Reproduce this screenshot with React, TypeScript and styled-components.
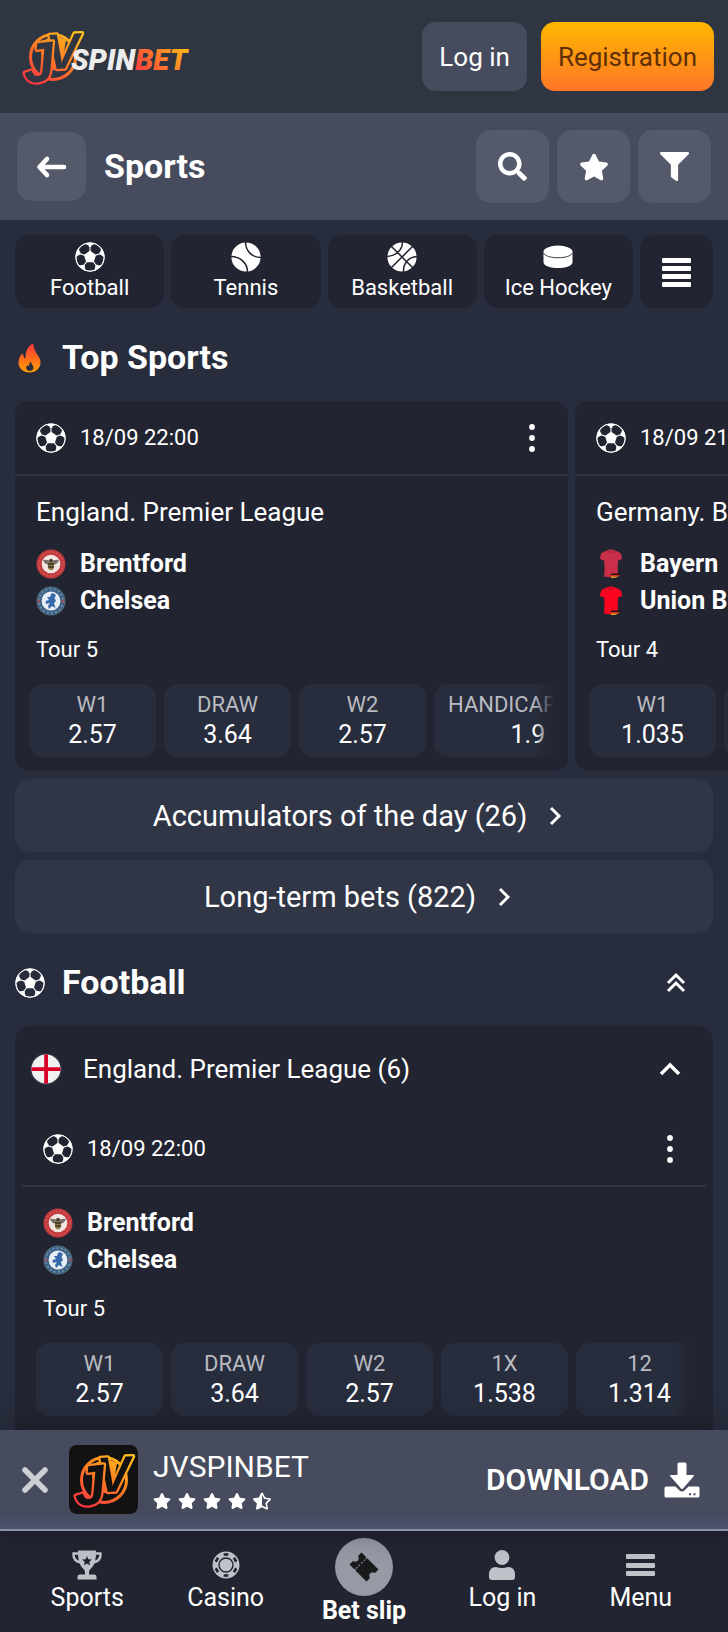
import React from "react";
import styled, { createGlobalStyle, css } from "styled-components";
import { FaFilter, FaSearch, FaStar, FaStarHalfAlt } from "react-icons/fa";

const color = {
  page: "#282d3d",
  header: "#2f3541",
  bar: "#464b5d",
  barButton: "#555a6a",
  card: "#222531",
  line: "#2f3442",
  shortcut: "#313646",
  muted: "#b9bbc1",
  navIcon: "#bfc2c8",
};

const GlobalStyle = createGlobalStyle`
  *, *::before, *::after { box-sizing: border-box; }
  body {
    margin: 0;
    background: ${color.page};
    color: #fff;
    font-family: Roboto, "Liberation Sans", sans-serif;
    font-size: 25px;
    line-height: 30px;
  }
  button { font: inherit; color: inherit; border: 0; padding: 0; cursor: pointer; }
  a { color: inherit; text-decoration: none; }
  h1, h2, h3, p, ul { margin: 0; padding: 0; font-size: inherit; font-weight: inherit; }
  ul { list-style: none; }
  svg { display: block; flex: none; }
`;

const Shell = styled.div`
  display: flex;
  flex-direction: column;
  height: 100vh;
`;

const TopHeader = styled.header`
  display: flex;
  flex: none;
  align-items: center;
  gap: 14px;
  height: 113px;
  padding: 0 14px 0 28px;
  background: ${color.header};
`;

const LogoLink = styled.a`
  margin-right: auto;
`;

const AuthButton = styled.button<{ $primary?: boolean }>`
  height: 69px;
  padding: 0 17px;
  border-radius: 14px;
  background: ${color.bar};
  font-size: 26px;
  ${(p) =>
    p.$primary &&
    css`
      background: linear-gradient(#ffb800, #ff7628);
      color: #5f2f06;
    `}
`;

const TitleBar = styled.div`
  display: flex;
  flex: none;
  align-items: center;
  gap: 8px;
  height: 107px;
  padding: 0 17px;
  background: ${color.bar};
`;

const SquareButton = styled.button<{ $size: number }>`
  display: grid;
  place-items: center;
  width: ${(p) => p.$size}px;
  height: ${(p) => p.$size}px;
  border-radius: 15px;
  background: ${color.barButton};
`;

const PageTitle = styled.h1`
  flex: 1;
  padding: 0 0 2px 10px;
  font-size: 34px;
  font-weight: 700;
  line-height: 40px;
`;

const Content = styled.main`
  flex: 1;
  min-height: 0;
  overflow: hidden auto;
  scrollbar-width: none;
  padding: 15px 15px 0;
`;

const SportTabs = styled.nav`
  display: flex;
  gap: 7px;
`;

const SportTab = styled.button`
  display: flex;
  flex: 1;
  flex-direction: column;
  align-items: center;
  gap: 3px;
  height: 73px;
  padding-top: 7px;
  border-radius: 14px;
  background: ${color.card};
  font-size: 22px;
  line-height: 26px;
`;

const AllSportsTab = styled(SportTab)`
  flex: none;
  width: 73px;
  justify-content: center;
  padding: 0;
`;

const SectionHeading = styled.div`
  display: flex;
  align-items: center;
  gap: 17px;
  height: 93px;
  padding: 6px 22px 0 0;
`;

const SectionTitle = styled.h2`
  flex: 1;
  padding-bottom: 2px;
  font-size: 34px;
  font-weight: 700;
  line-height: 40px;
`;

const IconButton = styled.button`
  display: grid;
  place-items: center;
  width: 30px;
  height: 40px;
  background: none;
`;

const Carousel = styled.div`
  display: flex;
  gap: 7px;
  margin-right: -15px;
  overflow: hidden;
`;

const MatchCard = styled.article<{ $slide?: boolean }>`
  display: flex;
  flex-direction: column;
  border-radius: 14px;
  background: ${color.card};
  ${(p) =>
    p.$slide &&
    css`
      flex: none;
      width: 553px;
    `}
`;

const MatchHead = styled.header`
  display: flex;
  align-items: center;
  gap: 14px;
  height: 75px;
  padding: 0 21px;
  border-bottom: 2px solid ${color.line};
  font-size: 22px;
`;

const MatchTime = styled.time`
  flex: 1;
`;

const MatchBody = styled.div`
  padding: 21px 21px 19px;
`;

const League = styled.h3`
  margin-bottom: 22px;
  font-size: 26px;
`;

const Teams = styled.ul`
  display: grid;
  gap: 7px;
`;

const Team = styled.li`
  display: flex;
  align-items: center;
  gap: 14px;
  font-weight: 700;
`;

const Tour = styled.p`
  margin-top: 19px;
  font-size: 22px;
`;

const OddsRow = styled.div`
  position: relative;
  display: flex;
  gap: 8px;
  margin: 0 14px 14px;
  overflow: hidden;
  &::after {
    content: "";
    position: absolute;
    inset: 0 0 0 auto;
    width: 20px;
    background: linear-gradient(90deg, transparent, ${color.card});
  }
`;

const OddButton = styled.button`
  display: flex;
  flex: none;
  flex-direction: column;
  align-items: center;
  min-width: 127px;
  height: 73px;
  padding: 6px 14px 0;
  border-radius: 14px;
  background: ${color.page};
  white-space: nowrap;
`;

const OddName = styled.span`
  color: ${color.muted};
  font-size: 22px;
  line-height: 30px;
`;

const Shortcut = styled.a`
  display: flex;
  align-items: center;
  justify-content: center;
  gap: 8px;
  height: 73px;
  margin-top: 8px;
  border-radius: 15px;
  background: ${color.shortcut};
  font-size: 29px;
`;

const IconSlot = styled.i`
  display: grid;
  place-items: center;
  width: 40px;
`;

const LeagueGroup = styled.section`
  padding: 0 7px 7px;
  border-radius: 14px 14px 0 0;
  background: ${color.card};
`;

const LeagueHead = styled.header`
  display: flex;
  align-items: center;
  gap: 21px;
  height: 86px;
  padding: 0 21px 0 8px;
`;

const LeagueName = styled.h3`
  flex: 1;
  font-size: 26px;
`;

const AppBanner = styled.aside`
  display: flex;
  flex: none;
  align-items: center;
  height: 101px;
  padding: 0 28px 0 20px;
  border-bottom: 2px solid #8b90ab;
  background: linear-gradient(${color.bar} 85%, #4c5470);
  box-shadow: 0 0 30px rgba(0, 0, 0, 0.3);
  z-index: 1;
`;

const CloseButton = styled(IconButton)`
  margin-right: 19px;
`;

const AppInfo = styled.div`
  flex: 1;
  padding: 0 15px;
`;

const AppName = styled.p`
  font-size: 30px;
  line-height: 36px;
`;

const Rating = styled.div`
  display: flex;
  gap: 7px;
  padding-top: 7px;
`;

const DownloadLink = styled.a`
  display: flex;
  align-items: center;
  gap: 15px;
  font-size: 30px;
  font-weight: 600;
`;

const BottomNav = styled.nav`
  display: flex;
  flex: none;
  height: 101px;
  padding: 0 18px;
  background: ${color.card};
`;

const NavItem = styled.a<{ $active?: boolean }>`
  display: flex;
  flex: 1;
  flex-direction: column;
  align-items: center;
  gap: ${(p) => (p.$active ? 0 : 3)}px;
  padding-top: ${(p) => (p.$active ? 7 : 19)}px;
  color: ${(p) => (p.$active ? "#191a1c" : color.navIcon)};
  span { color: #fff; font-weight: ${(p) => (p.$active ? 700 : 400)}; }
`;

const SlipCircle = styled.div`
  display: grid;
  place-items: center;
  width: 58px;
  height: 58px;
  border-radius: 50%;
  background: #9799a5;
`;

/* ---------- drawings ---------- */

function Emblem({ id, dark }: { id: string; dark: string }) {
  return (
    <g fontFamily='"Liberation Sans", sans-serif' fontStyle="italic">
      <defs>
        <linearGradient id={id} gradientUnits="userSpaceOnUse" x1="6" y1="60" x2="44" y2="4">
          <stop offset="0" stopColor="#ff3344" />
          <stop offset="0.5" stopColor="#ff7a24" />
          <stop offset="1" stopColor="#ffc21c" />
        </linearGradient>
      </defs>
      <circle cx="25" cy="32" r="22.500" fill="none" stroke={`url(#${id})`} strokeWidth="3" />
      <path d="M12 18Q25 8 38 15L33 45L15 45Z" fill={`url(#${id})`} />
      <g fill={dark} stroke={`url(#${id})`} strokeWidth="4.500" paintOrder="stroke" strokeLinejoin="round" fontWeight="700">
        <text x="19" y="44" fontSize="50" transform="rotate(-3 30 44)">V</text>
        <text x="-3" y="57" fontSize="56" transform="rotate(-6 8 58)">J</text>
      </g>
    </g>
  );
}

const Logo = () => (
  <svg width="160" height="64" viewBox="0 0 160 64" overflow="visible" role="img" aria-label="JVSPINBET">
    <defs>
      <linearGradient id="bet" gradientUnits="userSpaceOnUse" x1="106" y1="50" x2="150" y2="16">
        <stop offset="0" stopColor="#ff3340" />
        <stop offset="1" stopColor="#ffb21c" />
      </linearGradient>
    </defs>
    <Emblem id="logoMark" dark={color.header} />
    <text x="43" y="45" fontFamily="Roboto, sans-serif" fontWeight="900" fontStyle="italic" fontSize="29" fill="#ececec">
      SPIN<tspan fill="url(#bet)">BET</tspan>
    </text>
  </svg>
);

const AppIcon = () => (
  <svg width="69" height="69" viewBox="0 0 69 69" aria-hidden="true">
    <rect width="69" height="69" rx="8" fill="#121212" />
    <g transform="translate(10 3)">
      <Emblem id="appMark" dark="#121212" />
    </g>
  </svg>
);

const SoccerBall = ({ dark = color.card }: { dark?: string }) => (
  <svg width="30" height="30" viewBox="-16 -16 32 32" aria-hidden="true">
    <circle r="15.6" fill="#fff" />
    <g fill={dark}>
      {[0, 72, 144, 216, 288].map((angle) => (
        <path
          key={angle}
          transform={`rotate(${angle})`}
          d="M-3.200 5.500H3.200L5.600 8.600Q6 11.600 4.400 13.900Q0 15.400 -4.400 13.900Q-6 11.600 -5.600 8.600Z"
        />
      ))}
    </g>
    <circle r="15.2" fill="none" stroke="#fff" strokeWidth="0.9" />
  </svg>
);

const TennisBall = () => (
  <svg width="30" height="30" viewBox="0 0 30 30" aria-hidden="true">
    <circle cx="15" cy="15" r="14.6" fill="#fff" />
    <path d="M0 14.5C9 14.5 16.5 21 16.5 30M14.5 0C14.5 9 21 15.5 30 15.5" fill="none" stroke={color.card} strokeWidth="1.5" />
  </svg>
);

const Basketball = () => (
  <svg width="30" height="30" viewBox="0 0 30 30" aria-hidden="true">
    <circle cx="15" cy="15" r="14.6" fill="#fff" />
    <path
      d="M4 4L26 26M26 4L4 26M15.500 0C15.500 7 10 14 0 14.500M30 14.500C21 15 16 22 16.500 30"
      fill="none"
      stroke={color.card}
      strokeWidth="1.5"
    />
  </svg>
);

const Puck = () => (
  <svg width="30" height="30" viewBox="0 0 30 30" aria-hidden="true">
    <path d="M0.500 10V20C0.500 28 29.500 28 29.500 20V10Z" fill="#fff" />
    <ellipse cx="15" cy="9.800" rx="14.600" ry="6.200" fill="#fff" />
    <path d="M0.400 10.500C2 17.500 28 17.500 29.600 10.500" fill="none" stroke={color.card} strokeWidth="0.9" />
  </svg>
);

const Bars = ({ rows, size, thick }: { rows: number[]; size: number; thick: number }) => (
  <svg width={size} height="30" viewBox={`0 0 ${size} 30`} fill="currentColor" aria-hidden="true">
    {rows.map((y) => (
      <rect key={y} y={y} width={size} height={thick} rx="1" />
    ))}
  </svg>
);

const ArrowLeft = () => (
  <svg width="32" height="24" viewBox="0 0 32 24" fill="none" stroke="#fff" strokeWidth="4.600" strokeLinecap="round" strokeLinejoin="round" aria-hidden="true">
    <path d="M28 12H4M11 4L3.500 12L11 20" />
  </svg>
);

const Flame = () => (
  <svg width="30" height="30" viewBox="0 0 29 30" aria-hidden="true">
    <defs>
      <linearGradient id="flame" x1="0" y1="0" x2="0" y2="1">
        <stop offset="0" stopColor="#ff343c" />
        <stop offset="1" stopColor="#ffa000" />
      </linearGradient>
    </defs>
    <path
      fill="url(#flame)"
      fillRule="evenodd"
      d="M17.500 0.500C18.500 5 19 7.500 21.500 11C24 14.500 25 16.500 25 19.500C25 25.500 20 29.500 14 29.500C8 29.500 3 25.500 3 19.500C3 15.500 5 12.500 6.500 10.500C8 12 8.500 14 9 16C10.500 14.500 10 12 10.500 9.500C11.500 5 14 2.500 17.500 0.500ZM15 18.500C13.500 20.500 14 22 13 23.500L12 22C10.500 23.500 10.500 25 11 26C12.200 29 17.500 28.500 18 25C18.200 23 16 21 15 18.500Z"
    />
  </svg>
);

const Chevron = ({ direction }: { direction: "right" | "up" | "double" }) => (
  <svg width="22" height="22" viewBox="0 0 22 22" fill="none" stroke="#fff" strokeWidth="3" aria-hidden="true">
    {direction === "right" && <path d="M7 3L15 11L7 19" />}
    {direction === "up" && <path d="M2 16L11 7L20 16" strokeWidth="3.500" />}
    {direction === "double" && <path d="M3 11L11 3L19 11M3 19L11 11L19 19" />}
  </svg>
);

const MoreDots = () => (
  <svg width="6" height="28" viewBox="0 0 6 28" fill="#fff" aria-hidden="true">
    <circle cx="3" cy="3" r="2.900" />
    <circle cx="3" cy="14" r="2.900" />
    <circle cx="3" cy="25" r="2.900" />
  </svg>
);

const BrentfordBadge = () => (
  <svg width="30" height="30" viewBox="0 0 30 30" aria-hidden="true">
    <circle cx="15" cy="15" r="14.500" fill="#c23a3e" />
    <circle cx="15" cy="15" r="12" fill="none" stroke="#cf5856" strokeWidth="1.500" strokeDasharray="2 1.600" />
    <circle cx="15" cy="15" r="9.300" fill="#f3e6e1" />
    <path d="M7 11Q12 10 15 13Q18 10 23 11Q21 16 17 15.500H13Q9 16 7 11Z" fill="#77706a" />
    <ellipse cx="15" cy="16.500" rx="3.200" ry="4.800" fill="#8d7a3e" />
    <path d="M12 15H18M12.200 18H17.800" stroke="#37322c" strokeWidth="1.300" />
    <circle cx="15" cy="11.500" r="1.800" fill="#413c37" />
  </svg>
);

const ChelseaBadge = () => (
  <svg width="30" height="30" viewBox="0 0 30 30" aria-hidden="true">
    <circle cx="15" cy="15" r="14.500" fill="#53707d" />
    <circle cx="15" cy="15" r="11.500" fill="none" stroke="#3b6189" strokeWidth="4" />
    <circle cx="15" cy="15" r="12" fill="none" stroke="#7890a0" strokeWidth="1.600" strokeDasharray="2 2.200" />
    <circle cx="15" cy="15" r="9.400" fill="#e9eef5" />
    <path d="M17 7L20 9L18.500 12L20 15L18 17L19.500 22L16 20L13 23L12 20L14 17L10 18L9.500 15L13 14L11 11L14 11L15 8Z" fill="#3569ab" />
    <circle cx="3" cy="15" r="1.500" fill="#a14b5c" />
    <circle cx="27" cy="15" r="1.500" fill="#a14b5c" />
  </svg>
);

const Shirt = ({ fill }: { fill: string }) => (
  <svg width="30" height="30" viewBox="0 0 30 30" aria-hidden="true">
    <path d="M10.500 1.500Q15 -0.500 19.500 1.500L24.500 4Q26 7 26 10L22 11.500Q21.500 20 22 27Q15 29 8 27.500Q9 20 8 11.500L4 10Q4 7 5.500 4Z" fill={fill} />
    <path d="M11 1.500Q15 5 19 1.500" fill="none" stroke="#0004" />
    <path d="M15 24.500H24.500V26H15Z" fill="#26140f" />
    <path d="M15 26H24L22.500 27.500H15Z" fill="#d3331f" />
    <path d="M15 27.500H22.500Q19 29.500 15 29Z" fill="#e6a321" />
  </svg>
);

const EnglandFlag = () => (
  <svg width="32" height="32" viewBox="0 0 32 32" aria-hidden="true">
    <circle cx="16" cy="16" r="15.300" fill="#f0f0f0" stroke="#2c3242" strokeWidth="1.500" />
    <path d="M14.200 1.500H18V14.200H30.500V18H18V30.500H14.200V18H1.500V14.200H14.200Z" fill="#d80027" />
  </svg>
);

const CloseIcon = () => (
  <svg width="30" height="30" viewBox="0 0 30 30" stroke="#cfd0d5" strokeWidth="5.500" strokeLinecap="round" aria-hidden="true">
    <path d="M5 5L25 25M25 5L5 25" />
  </svg>
);

const DownloadIcon = () => (
  <svg width="36" height="36" viewBox="0 0 36 36" fill="#fff" aria-hidden="true">
    <path d="M13.500 2Q13.500 0.500 15 0.500H21Q22.500 0.500 22.500 2V13H29Q31 13 29.500 14.500L19 26.500Q18 27.500 17 26.500L6.500 14.500Q5 13 7 13H13.500Z" />
    <path
      fillRule="evenodd"
      d="M2 24.500H11.500L15.500 28.500Q18 30.500 20.500 28.500L24.500 24.500H34Q35.500 24.500 35.500 26V34Q35.500 35.500 34 35.500H2Q0.500 35.500 0.500 34V26Q0.500 24.500 2 24.500ZM25 31.200V33.200H27V31.200ZM29.500 31.200V33.200H31.500V31.200Z"
    />
  </svg>
);

const Trophy = () => (
  <svg width="30" height="30" viewBox="0 0 30 30" aria-hidden="true">
    <g fill="none" stroke="currentColor" strokeWidth="2.400">
      <path d="M6.500 3.500H1.500Q1 11 8.500 12.500M23.500 3.500H28.500Q29 11 21.500 12.500" />
    </g>
    <path fill="currentColor" d="M6 0.500H24Q24.500 13 19.500 18Q17 20 17 22V24.500H22Q24.500 24.500 24.500 27V29.500H5.500V27Q5.500 24.500 8 24.500H13V22Q13 20 10.500 18Q5.500 13 6 0.500Z" />
    <path fill={color.card} d="M15 6L16.300 9.300L20 9.600L17.200 11.900L18.100 15.500L15 13.500L11.900 15.500L12.800 11.900L10 9.600L13.700 9.300Z" />
  </svg>
);

const CasinoChip = () => (
  <svg width="30" height="30" viewBox="-15 -15 30 30" aria-hidden="true">
    <circle r="13.500" fill="currentColor" />
    <circle r="7" fill="none" stroke={color.card} strokeWidth="1.400" />
    <g fill={color.card}>
      {[0, 60, 120, 180, 240, 300].map((angle) => (
        <rect key={angle} x="-2.300" y="-11.800" width="4.600" height="2.600" transform={`rotate(${angle})`} />
      ))}
    </g>
  </svg>
);

const Ticket = () => (
  <svg width="30" height="30" viewBox="0 0 30 30" aria-hidden="true">
    <g transform="rotate(45 15 15)">
      <path
        fill="currentColor"
        d="M3 6.500H10V8H11V6.500H27V11.500Q24 12 24 15Q24 18 27 18.500V23.500H11V22H10V23.500H3V18.500Q6 18 6 15Q6 12 3 11.500Z"
      />
      <path d="M10.500 9V22" stroke="#9799a5" strokeDasharray="2 1.500" />
    </g>
  </svg>
);

const UserIcon = () => (
  <svg width="30" height="30" viewBox="0 0 30 30" fill="currentColor" aria-hidden="true">
    <circle cx="15" cy="7.500" r="7.400" />
    <path d="M9 17Q15 19 21 17Q28 17 28 25V27Q28 30 25 30H5Q2 30 2 27V25Q2 17 9 17Z" />
  </svg>
);

/* ---------- composed parts ---------- */

type TeamInfo = { name: string; badge: React.ReactNode };
type Odd = [name: string, value: string];

type MatchProps = {
  time: string;
  league?: string;
  teams: TeamInfo[];
  tour: string;
  odds: Odd[];
  slide?: boolean;
};

function Match({ time, league, teams, tour, odds, slide }: MatchProps) {
  return (
    <MatchCard $slide={slide}>
      <MatchHead>
        <SoccerBall />
        <MatchTime>{time}</MatchTime>
        <IconButton aria-label="More options">
          <MoreDots />
        </IconButton>
      </MatchHead>
      <MatchBody>
        {league && <League>{league}</League>}
        <Teams>
          {teams.map((team) => (
            <Team key={team.name}>
              {team.badge}
              {team.name}
            </Team>
          ))}
        </Teams>
        <Tour>{tour}</Tour>
      </MatchBody>
      <OddsRow>
        {odds.map(([name, value]) => (
          <OddButton key={name}>
            <OddName>{name}</OddName>
            <span>{value}</span>
          </OddButton>
        ))}
      </OddsRow>
    </MatchCard>
  );
}

const londonTeams: TeamInfo[] = [
  { name: "Brentford", badge: <BrentfordBadge /> },
  { name: "Chelsea", badge: <ChelseaBadge /> },
];

const germanTeams: TeamInfo[] = [
  { name: "Bayern", badge: <Shirt fill="#c92f49" /> },
  { name: "Union Berlin", badge: <Shirt fill="#fb0420" /> },
];

const mainOdds: Odd[] = [
  ["W1", "2.57"],
  ["DRAW", "3.64"],
  ["W2", "2.57"],
];

const sports = [
  { name: "Football", icon: <SoccerBall /> },
  { name: "Tennis", icon: <TennisBall /> },
  { name: "Basketball", icon: <Basketball /> },
  { name: "Ice Hockey", icon: <Puck /> },
];

export default function App() {
  return (
    <Shell>
      <GlobalStyle />
      <TopHeader>
        <LogoLink href="#home">
          <Logo />
        </LogoLink>
        <AuthButton>Log in</AuthButton>
        <AuthButton $primary>Registration</AuthButton>
      </TopHeader>
      <TitleBar>
        <SquareButton $size={69} aria-label="Back">
          <ArrowLeft />
        </SquareButton>
        <PageTitle>Sports</PageTitle>
        <SquareButton $size={73} aria-label="Search">
          <FaSearch size={29} />
        </SquareButton>
        <SquareButton $size={73} aria-label="Favourites">
          <FaStar size={30} />
        </SquareButton>
        <SquareButton $size={73} aria-label="Filter">
          <FaFilter size={29} />
        </SquareButton>
      </TitleBar>

      <Content>
        <SportTabs aria-label="Sports">
          {sports.map((sport) => (
            <SportTab key={sport.name}>
              {sport.icon}
              {sport.name}
            </SportTab>
          ))}
          <AllSportsTab aria-label="All sports">
            <Bars rows={[1, 9, 17, 25]} size={29} thick={5} />
          </AllSportsTab>
        </SportTabs>

        <SectionHeading>
          <Flame />
          <SectionTitle>Top Sports</SectionTitle>
        </SectionHeading>
        <Carousel>
          <Match
            slide
            time="18/09 22:00"
            league="England. Premier League"
            teams={londonTeams}
            tour="Tour 5"
            odds={[...mainOdds, ["HANDICAP 1 (0)", "1.9"]]}
          />
          <Match
            slide
            time="18/09 21:30"
            league="Germany. Bundesliga"
            teams={germanTeams}
            tour="Tour 4"
            odds={[["W1", "1.035"], ["DRAW", "15"], ["W2", "41"]]}
          />
        </Carousel>
        <Shortcut href="#accumulators">
          Accumulators of the day (26)
          <IconSlot>
            <Chevron direction="right" />
          </IconSlot>
        </Shortcut>
        <Shortcut href="#long-term">
          Long-term bets (822)
          <IconSlot>
            <Chevron direction="right" />
          </IconSlot>
        </Shortcut>

        <SectionHeading>
          <SoccerBall dark={color.page} />
          <SectionTitle>Football</SectionTitle>
          <IconButton aria-label="Collapse all">
            <Chevron direction="double" />
          </IconButton>
        </SectionHeading>
        <LeagueGroup>
          <LeagueHead>
            <EnglandFlag />
            <LeagueName>England. Premier League (6)</LeagueName>
            <IconButton aria-label="Collapse league">
              <Chevron direction="up" />
            </IconButton>
          </LeagueHead>
          <Match
            time="18/09 22:00"
            teams={londonTeams}
            tour="Tour 5"
            odds={[...mainOdds, ["1X", "1.538"], ["12", "1.314"]]}
          />
        </LeagueGroup>
      </Content>

      <AppBanner>
        <CloseButton aria-label="Close">
          <CloseIcon />
        </CloseButton>
        <AppIcon />
        <AppInfo>
          <AppName>JVSPINBET</AppName>
          <Rating role="img" aria-label="4.5 out of 5">
            {[1, 2, 3, 4].map((n) => (
              <FaStar key={n} size={18} />
            ))}
            <FaStarHalfAlt size={18} />
          </Rating>
        </AppInfo>
        <DownloadLink href="#download">
          DOWNLOAD
          <DownloadIcon />
        </DownloadLink>
      </AppBanner>

      <BottomNav aria-label="Main">
        <NavItem href="#sports">
          <Trophy />
          <span>Sports</span>
        </NavItem>
        <NavItem href="#casino">
          <CasinoChip />
          <span>Casino</span>
        </NavItem>
        <NavItem href="#bet-slip" $active>
          <SlipCircle>
            <Ticket />
          </SlipCircle>
          <span>Bet slip</span>
        </NavItem>
        <NavItem href="#login">
          <UserIcon />
          <span>Log in</span>
        </NavItem>
        <NavItem href="#menu">
          <Bars rows={[4, 13, 21]} size={29} thick={5} />
          <span>Menu</span>
        </NavItem>
      </BottomNav>
    </Shell>
  );
}
